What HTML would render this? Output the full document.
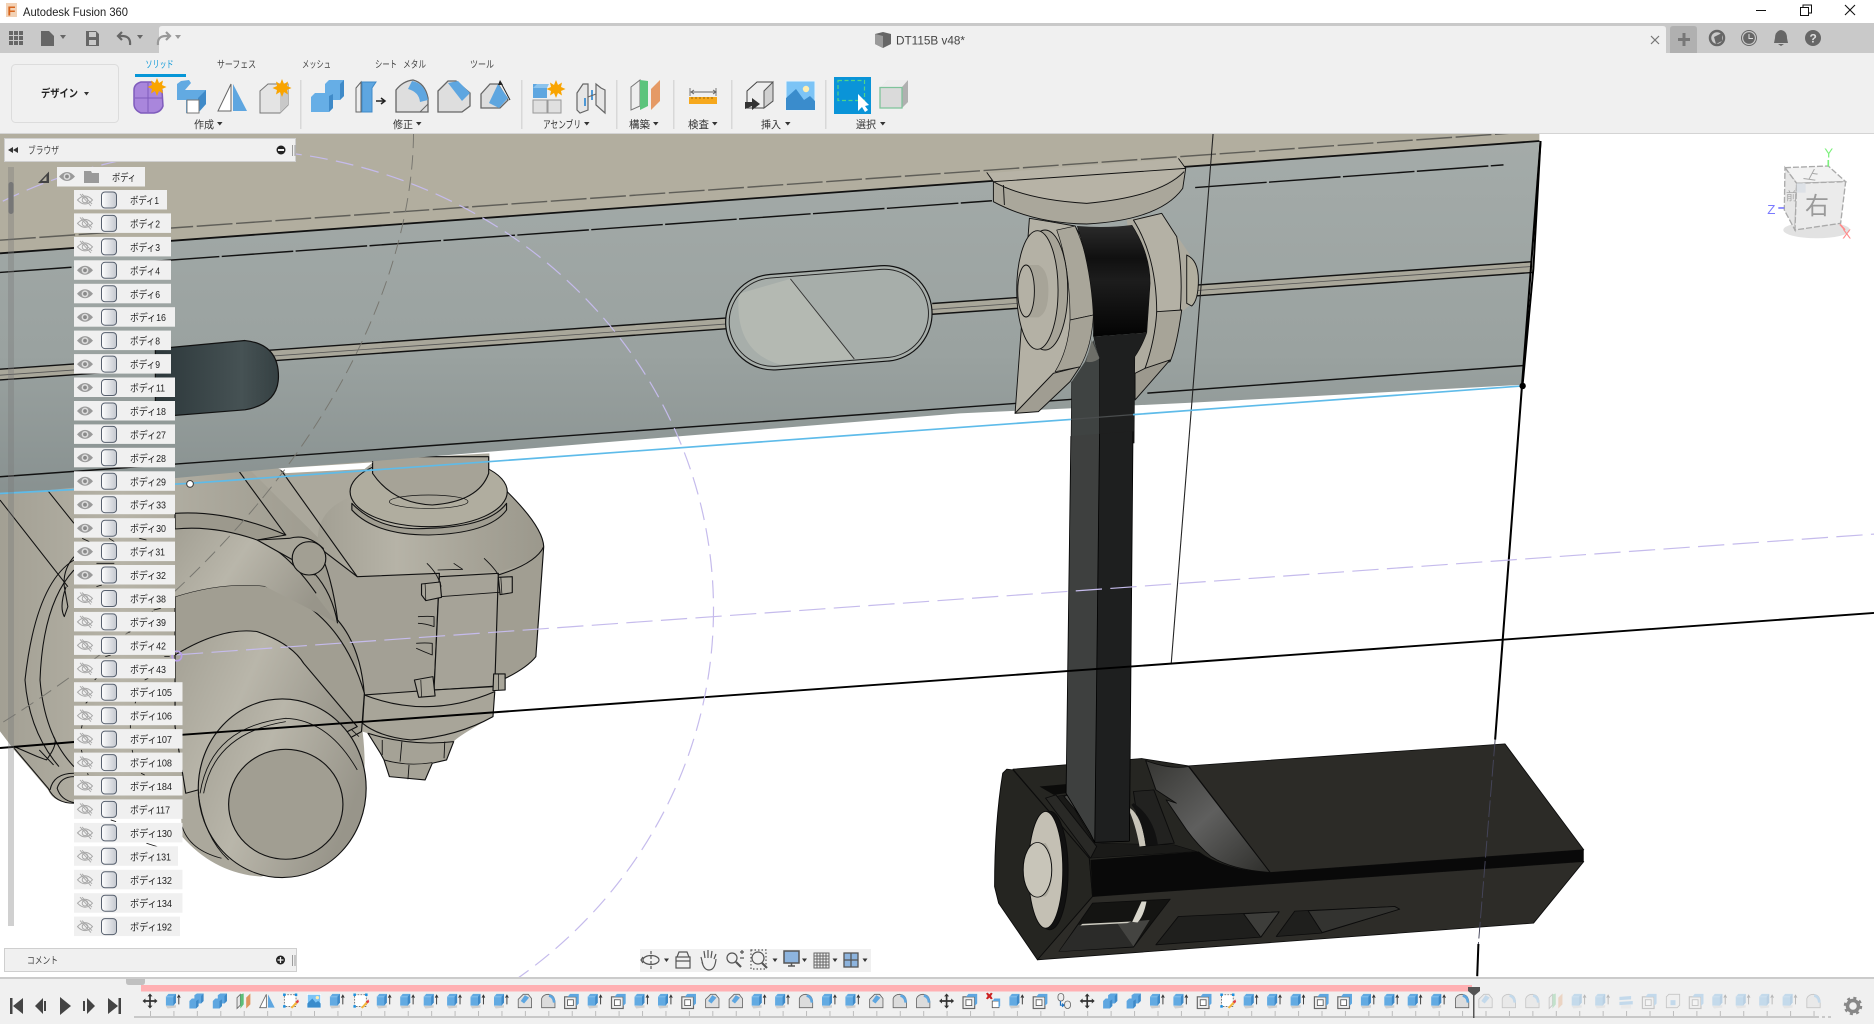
<!DOCTYPE html>
<html lang="ja"><head><meta charset="utf-8"><title>Autodesk Fusion 360</title>
<style>
html,body{margin:0;padding:0;width:1874px;height:1024px;overflow:hidden;background:#fff}
svg{position:absolute;left:0;top:0;display:block}
text{font-family:"Liberation Sans","Noto Sans CJK JP",sans-serif;fill:#333}
.r rect{fill:#f0f0f0}
.r text{font-size:10.5px;fill:#222}
.tab{font-size:10px;fill:#444}
.lbl{font-size:10.5px;fill:#333}
</style></head><body>
<svg width="1874" height="1024" viewBox="0 0 1568 857" preserveAspectRatio="none">
<defs>
<linearGradient id="gb" x1="0" y1="0" x2="0" y2="1"><stop offset="0" stop-color="#a4aba9"/><stop offset=".6" stop-color="#9aa2a0"/><stop offset="1" stop-color="#889190"/></linearGradient>
<linearGradient id="tn" x1="0" y1="0" x2="1" y2="0"><stop offset="0" stop-color="#a29f93"/><stop offset=".35" stop-color="#b6b3a7"/><stop offset=".7" stop-color="#a6a397"/><stop offset="1" stop-color="#9b988c"/></linearGradient>
<linearGradient id="tb" x1="0" y1="0" x2="1" y2=".4"><stop offset="0" stop-color="#a3a094"/><stop offset=".45" stop-color="#b9b6aa"/><stop offset="1" stop-color="#98958a"/></linearGradient>
<linearGradient id="fl" x1="0" y1="0" x2="1" y2="1"><stop offset="0" stop-color="#363633"/><stop offset=".5" stop-color="#5f5f5e"/><stop offset="1" stop-color="#2e2e2b"/></linearGradient>
<linearGradient id="hl" x1="0" y1="0" x2="1" y2="0"><stop offset="0" stop-color="#2c373a"/><stop offset=".7" stop-color="#465254"/><stop offset="1" stop-color="#354042"/></linearGradient>
<linearGradient id="bk" x1="0" y1="0" x2="0" y2="1"><stop offset="0" stop-color="#2b2b2b"/><stop offset=".3" stop-color="#101010"/><stop offset=".5" stop-color="#1d1d1d"/><stop offset="1" stop-color="#030303"/></linearGradient>
</defs>
<rect width="1568" height="857" fill="#fff"/>

<!-- lower machinery -->
<g transform="matrix(.2989 0 0 .2789 0 385)" stroke="#111" stroke-width="3.2" stroke-linejoin="round">
<path fill="#aba89c" stroke="none" d="M-10,60 L1370,-20 L1370,40 L1415,90 Q1520,200 1522,260 L1500,590 Q1470,630 1385,670 L1380,770 Q1280,830 1270,845 L1250,900 L1210,910 L1190,960 L1090,950 L1075,900 L1030,820 L1015,815 Q1030,950 1005,1040 Q950,1200 730,1250 Q600,1240 510,1130 L505,1030 L210,1030 Q150,1030 135,990 L40,870 L-10,800 Z"/>
<path fill="url(#tn)" stroke="none" d="M-10,90 L700,30 L1000,350 L1000,700 L500,1030 L210,1030 Q150,1030 135,990 L40,870 L-10,800 Z"/>
<path fill="url(#tn)" d="M985,110 Q880,150 890,260 L1000,350 L1395,335 Q1500,310 1522,260 Q1520,200 1415,90 Z" stroke="none"/>
<path fill="#a19e92" stroke="none" d="M1395,340 Q1500,310 1522,260 L1500,590 Q1470,630 1385,670Z"/>
<path fill="none" d="M1415,90 Q1520,200 1522,260 Q1500,310 1395,345 M1522,260 L1500,590 Q1470,630 1385,670"/>
<path fill="#a3a095" d="M890,260 L1000,350 L1230,340 L1215,690 L1020,705 Q1010,560 945,480 Q930,350 890,260Z"/>
<ellipse cx="1200" cy="95" rx="220" ry="105" fill="#b0ad9f"/>
<path fill="#a09d91" d="M985,130 Q1060,215 1200,205 Q1370,200 1418,130 L1418,150 Q1370,220 1200,225 Q1050,225 985,150Z"/>
<path fill="#a6a397" d="M1043,-10 L1043,40 Q1100,130 1210,135 Q1340,125 1368,40 L1368,-10Z"/>
<ellipse cx="1200" cy="125" rx="110" ry="20" fill="none" stroke-width="2"/>
<path fill="#a8a599" d="M1020,705 Q1200,780 1385,695 L1380,770 Q1280,830 1150,840 Q1060,830 1015,790Z"/>
<path fill="#a5a296" d="M1030,820 Q1150,860 1270,845 L1250,900 L1210,910 L1190,960 L1090,950 L1075,900 L1065,880Z"/>
<path fill="none" stroke-width="2.5" d="M1070,840 L1070,885 M1125,845 L1120,905 M1245,845 L1243,895 M1075,900 Q1140,920 1210,908 M1145,915 L1142,958"/>
<path fill="#a6a398" d="M1230,350 L1395,340 L1385,680 L1215,690Z"/>
<path fill="none" stroke-width="2.5" d="M1195,310 Q1225,340 1235,380 M1270,310 L1295,328 L1225,330 M1355,295 Q1385,325 1395,345 M1232,410 L1420,395 M1215,690 L1390,678 M1170,470 Q1200,468 1215,470 L1215,500 Q1190,490 1170,490 M1165,550 Q1190,548 1210,550 L1210,585 Q1185,575 1165,565"/>
<path fill="#a9a69a" d="M1180,372 L1232,366 L1236,412 L1192,422 L1180,405Z"/>
<path fill="#a9a69a" d="M1395,352 L1434,350 L1434,398 L1400,404Z"/>
<path fill="#a9a69a" d="M1160,660 L1212,650 L1218,708 L1172,712Z"/>
<path fill="#a9a69a" d="M1382,642 L1414,642 L1414,690 L1380,692Z"/>
<path fill="none" stroke-width="2" d="M1190,372 L1192,420 M1402,352 L1405,402 M1178,660 L1180,710 M1395,642 L1396,690"/>
<path fill="#a19e92" d="M490,410 Q620,365 740,378 Q950,440 1020,700 L1012,815 L700,1000 L500,760 L490,590Z"/>
<path fill="url(#tb)" d="M490,585 Q620,500 720,515 Q815,550 850,610 L1000,800 L760,930 L520,1000 L490,800Z"/>
<path fill="url(#tb)" stroke="none" d="M490,210 Q640,190 760,240 Q800,280 880,400 L945,490 L740,378 Q620,365 490,410Z"/>
<path fill="#9c998d" d="M490,160 Q640,150 800,225 L720,240 Q600,195 490,207Z"/>
<path fill="none" d="M670,35 L800,225 M780,20 L1000,350 M720,240 Q800,270 885,400 M880,340 Q930,400 945,490"/>
<path fill="#a8a599" d="M720,240 L810,235 Q860,220 905,265 L880,345 L820,300Z"/>
<ellipse cx="865" cy="295" rx="47" ry="50" fill="#a29f93"/>
<ellipse cx="790" cy="985" rx="235" ry="268" fill="url(#tb)"/>
<path fill="none" stroke-width="2.5" d="M560,1000 Q590,800 800,775 Q920,780 1000,930 M570,1000 Q600,820 800,785 M1005,830 L985,810"/>
<path fill="none" stroke-width="2.5" d="M555,1000 Q570,1130 640,1200 M510,1100 Q530,1170 620,1195"/>
<ellipse cx="800" cy="1033" rx="160" ry="165" fill="#a19e92"/>
<g fill="none" stroke-width="3">
<path d="M207,300 Q100,370 70,660 Q80,800 150,900 L165,920"/>
<path d="M207,330 Q120,430 112,660 Q125,830 207,920"/>
<path d="M207,290 Q175,330 180,380 L190,440 L180,470 Q165,440 185,380 M125,80 L207,190 M0,120 L190,380"/>
<path d="M40,860 L105,890 L130,900 Q165,850 150,830 M110,870 L150,915"/>
<path d="M40,865 L135,985 Q155,1030 207,1030 M207,940 Q150,940 140,990 M207,950 Q170,950 160,985 Q170,1020 207,1028"/>
</g>
<g fill="none" stroke-width="2.5"><path d="M230,235 L250,245 M305,235 L320,245 M390,235 L410,240 M270,310 L320,310 M270,380 L285,375 M430,450 L450,445 M355,520 L365,515 M295,590 L310,585 M460,590 L475,590 M265,660 L270,655 M405,660 L415,655 M240,730 L245,725 M378,730 L380,725 M230,795 L228,805 M365,795 L365,805 M228,870 L230,880 M370,870 L372,880 M245,940 L247,945 M395,940 L405,945 M310,1080 L325,1085 M410,1150 L440,1160"/></g>
</g>

<!-- beam -->
<path fill="url(#gb)" d="M0,212 L1288,118 L1274,322 L998,337 L803,346 L312,386 L233,392 L0,414Z"/>
<path fill="#fff" d="M233,392 L312,387 L305,392.5 L239,396Z"/>
<path fill="#b2ae9f" d="M0,112 L1288,112 L1288,118 L0,212Z"/>
<path fill="#a9a79a" d="M0,309 L1282,219 L1283,228 L0,318Z"/>
<g fill="none" stroke="#111" stroke-width="1.2">
<path d="M0,212 L1288,118" stroke-width="1.5"/>
<path d="M0,201 L1285,110" stroke="#5f5e58" stroke-dasharray="30 3"/>
<path d="M0,228 L830,168 M1000,157 L1258,138" stroke-dasharray="60 2"/>
<path d="M0,309 L610,266 M780,254 L1282,219 M0,318 L610,275 M780,263 L1283,228"/>
<path d="M0,314 L610,271 M780,259 L1282,223" stroke="#555" stroke-width=".7"/>
<path d="M0,399 L900,334 M960,329 L1274,306"/>
</g>
<g transform="rotate(-4.5 693 266)">
<rect x="607" y="226" width="173" height="80" rx="40" fill="#a7aeaa" stroke="#111" stroke-width="1"/>
<path fill="#b4b9b2" d="M620,240 L664,231 L712,302 L650,302 Q612,288 620,240Z"/>
<rect x="610" y="229" width="167" height="74" rx="37" fill="none" stroke="#222" stroke-width=".8"/>
<path d="M664,231 L712,302" stroke="#333" fill="none" stroke-width=".8"/>
</g>
<path fill="url(#hl)" stroke="#111" d="M130,292 L205,285 Q233,288 233,315 Q233,338 205,343 L130,349Z"/>

<!-- bracket -->
<g transform="matrix(.2789 0 0 .2789 803.3 117.2)" stroke="#111" stroke-width="2.8" stroke-linejoin="round">
<path fill="#aaa79b" d="M100,125 L100,185 Q220,250 380,252 Q600,240 668,145 L677,85Z"/>
<path fill="#b7b3a6" d="M100,125 Q200,180 380,190 Q600,170 677,85 L660,55 L80,100Z" stroke="none"/>
<path fill="none" d="M100,125 Q200,180 380,190 Q600,170 672,95 M130,135 L133,195 M80,97 L100,125 M655,55 L677,85 M100,125 L677,85"/>
<path fill="#b4b1a5" d="M208,235 L165,820 L280,700 L360,680 L400,520 L385,330 L345,258 L270,245Z"/>
<path fill="#a09d92" d="M165,820 L280,700 L360,680 L330,725 L235,815Z"/>
<path fill="#a9a69a" d="M290,270 L345,258 Q400,380 400,525 L330,540 Q330,380 290,270Z" stroke-width="2"/>
<path fill="#a5a296" d="M330,540 L400,525 Q395,620 360,680 L285,695 Q325,630 330,540Z" stroke-width="2"/>
<ellipse cx="255" cy="450" rx="68" ry="180" fill="#a7a498"/>
<ellipse cx="232" cy="450" rx="62" ry="178" fill="#b4b1a5"/>
<path d="M205,375 L235,375 Q265,390 265,450 Q265,520 235,532 L205,532Z" fill="#a7a498" stroke="none"/>
<ellipse cx="198" cy="453" rx="25" ry="78" fill="#b4b1a5"/>
<path fill="#aeab9f" stroke="none" d="M500,240 L605,220 L690,345 L690,495 L660,520 L630,665 L525,700 L520,400Z"/>
<path fill="#b4b1a5" d="M520,240 L605,220 L650,290 Q670,400 660,520 L590,520 Q590,350 520,240Z"/>
<path fill="#a7a498" d="M590,515 L665,510 Q650,620 630,665 L555,685 Q585,600 590,515Z"/>
<path fill="#9c998e" d="M555,685 L630,660 L525,780 L525,700Z"/>
<path fill="#b2af9f" d="M680,345 Q715,360 715,420 Q715,480 695,498 L680,490Z"/>
<path fill="url(#bk)" stroke="none" d="M352,258 Q440,265 515,255 Q570,340 570,430 L560,578 L400,590 Q405,430 352,258Z"/>
<path fill="#1e1f1f" stroke="none" d="M400,590 L560,578 Q545,620 524,650 L522,910 L418,910 L418,655 Q405,620 400,590Z"/>
<path fill="#3f4342" stroke="none" d="M400,600 L418,655 L418,910 L333,910 L335,725 L375,665Z"/>
<path fill="#6d6e68" stroke="none" d="M395,600 L418,655 Q400,670 378,665Z"/>
<path fill="none" d="M352,258 Q405,430 400,590 M515,255 Q570,340 570,430 L560,578 Q545,620 524,650 L522,910 M418,655 L418,910 M335,725 L333,910" stroke-width="2"/>
</g>

<!-- foot -->
<g transform="matrix(.3416 0 0 .2789 811.7 619.2)" stroke="#0c0c0c" stroke-width="2.4" stroke-linejoin="round">
<path fill="#252521" d="M90,88 L105,90 L292,355 L300,470 L165,660 L70,490 L60,440 Q60,250 80,100Z"/>
<path fill="#2d2c28" d="M300,470 L1503,365 L1380,550 L165,660Z"/>
<path fill="#262622" d="M105,88 L420,56 L535,78 L735,398 L300,470 L292,355Z"/>
<path fill="#0b0b0a" d="M170,140 L235,133 L235,160 L205,165Z" stroke="none"/>
<path fill="#2c2b27" d="M535,78 L1310,12 L1503,330 L735,398Z"/>
<path fill="url(#fl)" d="M430,62 Q490,90 535,80 L735,398 Q640,390 590,350 Q560,320 530,270 L480,180 L505,190 L455,150Z"/>
<path fill="#090909" stroke="none" d="M295,360 L560,335 Q620,390 735,398 L1503,330 L1503,365 L300,470Z"/>
<path fill="#1a1a18" d="M185,175 L235,165 L305,310 L500,315 L555,335 L295,355Z" stroke-width="1.5"/>
<path fill="#222220" d="M400,155 L450,150 L500,310 L420,320Z"/>
<path fill="#c9c5b9" stroke="none" d="M385,200 Q420,220 430,318 L415,320 Q405,250 385,200Z"/>
<path fill="#111" stroke="none" d="M400,190 Q450,230 460,315 L430,318 Q420,230 395,195Z"/>
<path fill="#292926" d="M185,175 L210,165 L310,320 L295,355Z"/>
<path fill="#4a4b48" d="M230,170 Q260,150 290,190 L300,230 L295,265Z"/>
<ellipse cx="195" cy="392" rx="45" ry="178" fill="#111"/>
<ellipse cx="185" cy="390" rx="42" ry="175" fill="#c4c0b4"/>
<path fill="#aba89c" stroke="none" d="M150,312 L185,310 Q202,340 200,390 Q200,450 185,470 L150,470Z"/>
<ellipse cx="165" cy="390" rx="35" ry="82" fill="#c8c5b9"/>
<path fill="#141412" d="M300,490 L490,478 L400,622 L218,635Z"/>
<path fill="#2b2b29" stroke="none" d="M265,555 L360,550 L400,620 L218,635Z"/>
<path fill="#444441" stroke="none" d="M360,550 L440,540 L400,620Z"/>
<path fill="#cfcdc2" stroke="none" d="M275,552 L395,545 L385,550 L270,557Z"/>
<path fill="#d8d6cc" stroke="none" d="M420,485 L432,485 Q425,530 410,548 L397,546Z"/>
<path fill="#1f1f1d" d="M510,530 L757,516 L712,592 L455,615Z"/>
<path fill="#3d3d3a" d="M670,522 L757,516 L712,592Z"/>
<path fill="#1f1f1d" d="M795,514 L1040,500 L1052,508 L860,580 L750,590Z"/>
<path fill="#333330" d="M828,513 L1040,500 L1052,508 L862,578Z"/>
</g>

<!-- arm, over the foot -->
<path fill="#3e403f" d="M896,365 L920,363 L916,705 L912,697 L892,664Z"/>
<path fill="#1e1f1f" d="M920,363 L948,361 L945,704 L916,706Z"/>
<path d="M896,365 L892,664 L912,697 L916,705 M920,363 L916,705 M948,361 L945,704 M916,705 L945,704" stroke="#000" stroke-width=".7" fill="none"/>

<!-- construction lines -->
<g fill="none">
<path d="M1015,112 L980,555" stroke="#222" stroke-width=".9"/>
<path d="M1289,118 L1251,619 M1237,790 L1236,817" stroke="#000" stroke-width="1.7"/>
<path d="M1251,619 L1237,790" stroke="#45455a" stroke-width=".8" stroke-dasharray="14 3"/>
<path d="M0,626 L62,621 M152,615 L1568,513" stroke="#000" stroke-width="1.6"/>
<path d="M148,548 L1568,447" stroke="#c5bbec" stroke-width="1" stroke-dasharray="22 7"/>
<ellipse cx="190" cy="510" rx="407" ry="385" stroke="#c5bbec" stroke-width="1" stroke-dasharray="15 7"/>
<path d="M346,112 C345,250 250,450 0,606" stroke="#77766f" stroke-width=".8" stroke-dasharray="12 6"/>
<path d="M0,413 L159,404.5 L896,351 M948,347 L1274,323" stroke="#5ebbe9" stroke-width="1.4"/>
<path d="M896,351 L948,347" stroke="#4a4d4e" stroke-width="1"/>
<path d="M1289,118 L1283,225 L1274,322" stroke="#000" stroke-width="1.6"/>
</g>
<circle cx="1274" cy="323" r="2.7" fill="#000"/>
<circle cx="159" cy="405" r="2.8" fill="#fff" stroke="#333" stroke-width=".8"/>
<circle cx="148" cy="549" r="4" fill="none" stroke="#b79fe6" stroke-width="1.4"/>
</svg>

<svg width="1874" height="1024" viewBox="0 0 1874 1024">
<defs>
<linearGradient id="cy" x1="0" y1="0" x2="1" y2="0"><stop offset="0" stop-color="#fff"/><stop offset="1" stop-color="#c4c8cf"/></linearGradient>
<symbol id="c" width="18" height="18" viewBox="0 0 18 18"><rect x="1.5" y="1" width="15" height="16" rx="3.5" fill="url(#cy)" stroke="#57606e" stroke-width="1"/></symbol>
<symbol id="e" width="18" height="12" viewBox="0 0 18 12"><path d="M1,6 Q9,-3 17,6 Q9,15 1,6Z" fill="#9a9a9a"/><circle cx="9" cy="6" r="3.4" fill="#ddd"/><circle cx="9" cy="6" r="1.9" fill="#8a8a8a"/></symbol>
<symbol id="h" width="18" height="14" viewBox="0 0 18 14"><path d="M1.5,7 Q9,-1 16.5,7 Q9,15 1.5,7Z" fill="none" stroke="#a8a8a8" stroke-width="1"/><circle cx="9" cy="7" r="2.8" fill="none" stroke="#a8a8a8"/><path d="M4,1 L15,13 M6,1 L16,11" stroke="#a8a8a8" stroke-width=".9"/></symbol>
<symbol id="E" width="20" height="20" viewBox="-2 -2 24 24"><path d="M1,16 L13,15 L13,18 L3,19Z" fill="#cfcfcf"/><path d="M1,5 L4,1.5 L13,1.5 L13,12 L10,15.5 L1,15.5Z" fill="#62aae2"/><path d="M10,15.5 L10,5 L13,1.5 L13,12Z" fill="#3f8ac8"/><path d="M1,5 L10,5" stroke="#8cc4ee"/><path d="M16.5,14 L16.5,4 M14.8,6 L16.5,3 L18.2,6" stroke="#333" fill="none" stroke-width="1.1"/></symbol>
<symbol id="O" width="20" height="20" viewBox="-2 -2 24 24"><path d="M1,10 L4,7 L7,7 L7,3 L10,1 L18,1 L18,10 L15,13 L12,13 L12,16 L9,19 L1,19Z" fill="#5ea6e0"/><path d="M15,13 L15,4 L18,1 L18,10Z M9,19 L9,10 L12,8 L12,16Z" fill="#3f8ac8"/></symbol>
<symbol id="C" width="20" height="20" viewBox="-2 -2 24 24"><path d="M2,8 L8,2 L14,2 L18,7 L18,18 L2,18Z" fill="#e0e0e0" stroke="#666"/><path d="M5,10 L10,3 L15,6 L9,13Z" fill="#5ea6e0"/></symbol>
<symbol id="F" width="20" height="20" viewBox="-2 -2 24 24"><path d="M2,7 Q4,2 10,2 Q18,3 18,12 L18,18 L2,18Z" fill="#dcdcdc" stroke="#666"/><path d="M11,2 Q18,3 18.5,12 L15.5,12 Q15,6 10.5,5Z" fill="#5ea6e0"/></symbol>
<symbol id="H" width="20" height="20" viewBox="-2 -2 24 24"><rect x="1.5" y="5" width="14" height="14" fill="#eee" stroke="#666" stroke-width="1.4"/><rect x="5" y="8.5" width="7" height="7" fill="#fff" stroke="#555"/><path d="M5,5 L8,1.5 L18.5,1.5 L18.5,13 L15.5,16 L15.5,5" fill="#5ea6e0"/></symbol>
<symbol id="M" width="20" height="20" viewBox="-2 -2 24 24"><path d="M10,1 L13,4.5 L11,4.5 L11,9 L15.5,9 L15.5,7 L19,10 L15.5,13 L15.5,11 L11,11 L11,15.5 L13,15.5 L10,19 L7,15.5 L9,15.5 L9,11 L4.5,11 L4.5,13 L1,10 L4.5,7 L4.5,9 L9,9 L9,4.5 L7,4.5Z" fill="#333"/></symbol>
<symbol id="P" width="20" height="20" viewBox="-2 -2 24 24"><path d="M2,6 L6,2 L6,15 L2,19Z" fill="#e8e8e8" stroke="#666"/><path d="M6,2 L10,1 L10,14 L6,19Z" fill="#5cbf78"/><path d="M13,6 L18,1 L18,14 L13,19Z" fill="#e0955e"/></symbol>
<symbol id="R" width="20" height="20" viewBox="-2 -2 24 24"><path d="M9,2 L9,18 L1,18Z" fill="#fff" stroke="#666"/><path d="M11,2 L19,18 L11,18Z" fill="#5ea6e0"/></symbol>
<symbol id="S" width="20" height="20" viewBox="-2 -2 24 24"><rect x="2.5" y="2.5" width="14" height="14" fill="#fff" stroke="#666" stroke-dasharray="2 1.5"/><rect x="1" y="1" width="3" height="3" fill="#1a8fe0"/><rect x="15" y="1" width="3" height="3" fill="#1a8fe0"/><rect x="1" y="15" width="3" height="3" fill="#1a8fe0"/><path d="M10,18 L17,10 L19,12 L12,19Z" fill="#f6b73c"/><path d="M16,11 L19,8 L20,11 L18,13Z" fill="#e0404a"/></symbol>
<symbol id="I" width="20" height="20" viewBox="-2 -2 24 24"><rect x="2" y="2" width="16" height="16" fill="#7cc4f6" stroke="#fff"/><circle cx="14" cy="6" r="2" fill="#ffeeb0"/><path d="M2,18 L2,13 L8,7 L12,12 L15,10 L18,13 L18,18Z" fill="#3a8ccc"/></symbol>
<symbol id="X" width="20" height="20" viewBox="-2 -2 24 24"><path d="M1,1 L3,0 L5,2 L7,0 L9,1 L7,4 L9,7 L7,8 L5,6 L3,8 L1,7 L3,4Z" fill="#cc2222"/><rect x="8.5" y="10" width="8" height="8" fill="#fff" stroke="#555"/><path d="M9,10 L11,7 L18,7 L18,16 L16,18 L16,10Z" fill="#5ea6e0"/></symbol>
<symbol id="J" width="20" height="20" viewBox="-2 -2 24 24"><rect x="3" y="1" width="7" height="9" rx="3.5" fill="#eee" stroke="#666"/><rect x="11" y="10" width="7" height="9" rx="3.5" fill="#eee" stroke="#666"/><path d="M6,10 L6,15 L10,15 M8,13 L10,15 L8,17" stroke="#1a6fc0" fill="none" stroke-width="1.4"/></symbol>
<symbol id="B" width="20" height="20" viewBox="-2 -2 24 24"><path d="M2,5 L5,2 L18,2 L18,15 L15,18 L2,18Z" fill="#eee" stroke="#666"/><rect x="7" y="9" width="6" height="6" fill="#5ea6e0"/></symbol>
<symbol id="Y" width="20" height="20" viewBox="-2 -2 24 24"><path d="M2,5 L16,4 L16,8 L2,9Z M2,11 L18,10 L18,14 L2,15Z" fill="#5ea6e0"/><path d="M4,15 L16,15 L16,19 L4,19Z" fill="#ddd"/></symbol>
<pattern id="tk" width="23.43" height="6" patternUnits="userSpaceOnUse" x="150"><rect width="1" height="6" fill="#bcbcbc"/></pattern>
<polygon id="star" points="0,-9 2,-4 6,-6.5 5,-2 9.5,0 5,2 6,6.5 2,4 0,9 -2,4 -6,6.5 -5,2 -9.5,0 -5,-2 -6,-6.5 -2,-4" fill="#f9a400"/>
</defs>

<!-- title bar -->
<rect width="1874" height="23" fill="#fff"/>
<rect x="6" y="3" width="11" height="14" fill="#f2d2b6"/>
<text x="7.5" y="15.5" style="font-size:13px;font-weight:bold;fill:#d8651d">F</text>
<text x="23" y="16" style="font-size:12px;fill:#222" textLength="105" lengthAdjust="spacingAndGlyphs">Autodesk Fusion 360</text>
<path d="M1756,10.5 H1766" stroke="#111" stroke-width="1"/>
<path d="M1800.5,7.5 h8 v8 h-8Z M1803,7 V5 h8.5 v8 h-2.5" fill="none" stroke="#111"/>
<path d="M1845,5 L1855,15 M1855,5 L1845,15" stroke="#111" stroke-width="1.1"/>

<!-- tab strip -->
<rect y="23" width="1874" height="30" fill="#c9c9c9"/>
<path d="M159,53 V29 Q159,26 162,26 H1663 Q1666,26 1666,29 V53Z" fill="#f0f0f0"/>
<rect y="53" width="1874" height="80" fill="#f0f0f0"/>
<rect y="133" width="1874" height="1" fill="#d4d4d4"/>
<g fill="#666">
<rect x="9" y="31" width="4" height="4"/><rect x="14" y="31" width="4" height="4"/><rect x="19" y="31" width="4" height="4"/>
<rect x="9" y="36" width="4" height="4"/><rect x="14" y="36" width="4" height="4"/><rect x="19" y="36" width="4" height="4"/>
<rect x="9" y="41" width="4" height="4"/><rect x="14" y="41" width="4" height="4"/><rect x="19" y="41" width="4" height="4"/>
<path d="M41,31 H49 L54,36 V46 H41Z"/>
<path d="M60,35 h6 l-3,4Z"/>
<path d="M86,31 H96 L99,34 V46 H86Z M89,32 V37 H96 V32Z M89,40 V45 H96 V40Z" fill-rule="evenodd"/>
<path d="M137,35 h6 l-3,4Z"/>
</g>
<path d="M130,45 Q131,36 122,36 L118,36 M122,32 L118,36 L122,40" fill="none" stroke="#666" stroke-width="2.2"/>
<path d="M158,45 Q157,36 166,36 L170,36 M166,32 L170,36 L166,40" fill="none" stroke="#999" stroke-width="2.2"/>
<path d="M175,35 h6 l-3,4Z" fill="#999"/>
<path d="M875,34 L883,32 L891,34 L891,44 L883,48 L875,44Z" fill="#666"/><path d="M875,34 L883,36 L883,48 L875,44Z" fill="#9a9a9a"/>
<text x="896" y="44.5" style="font-size:12px;fill:#444" textLength="69" lengthAdjust="spacingAndGlyphs">DT115B v48*</text>
<path d="M1651,36 L1659,44 M1659,36 L1651,44" stroke="#777" stroke-width="1.2"/>
<path d="M1670,53 V29 Q1670,26 1673,26 H1694 Q1697,26 1697,29 V53Z" fill="#b0b0b0"/>
<path d="M1684,33 V46 M1678,39.5 H1690" stroke="#777" stroke-width="3"/>
<circle cx="1717" cy="38" r="7" fill="none" stroke="#666" stroke-width="2.5"/><path d="M1714,37 L1722,33 L1722,41 L1716,44Z" fill="#666"/>
<circle cx="1749" cy="38" r="7.5" fill="none" stroke="#666"/><circle cx="1749" cy="38" r="5.8" fill="#666"/><path d="M1749,34 V38.5 H1753" stroke="#ddd" fill="none"/>
<path d="M1781,30 Q1787,31 1787,38 L1788,43 H1774 L1775,38 Q1775,31 1781,30Z M1778,44 H1784 L1781,46Z" fill="#666"/>
<circle cx="1813" cy="38" r="8" fill="#666"/><text x="1809.5" y="42.5" style="font-size:12px;font-weight:bold;fill:#ddd">?</text>

<!-- design button -->
<rect x="11.5" y="64.5" width="107" height="58" rx="4" fill="#f0f0f0" stroke="#dcdcdc"/>
<text x="41" y="97" style="font-size:11px;font-weight:bold;fill:#222" textLength="37" lengthAdjust="spacingAndGlyphs">デザイン</text>
<path d="M84,92 h5 l-2.5,3.5Z" fill="#333"/>
<!-- tabs -->
<text x="145.5" y="68" class="tab" style="fill:#0696d7" textLength="28" lengthAdjust="spacingAndGlyphs">ソリッド</text>
<rect x="135" y="74" width="51" height="3" fill="#0696d7"/>
<text x="217" y="68" class="tab" textLength="39" lengthAdjust="spacingAndGlyphs">サーフェス</text>
<text x="302" y="68" class="tab" textLength="29" lengthAdjust="spacingAndGlyphs">メッシュ</text>
<text x="375" y="68" class="tab" textLength="22" lengthAdjust="spacingAndGlyphs">シート</text>
<text x="403" y="68" class="tab" textLength="23" lengthAdjust="spacingAndGlyphs">メタル</text>
<text x="470" y="68" class="tab" textLength="24" lengthAdjust="spacingAndGlyphs">ツール</text>
<g fill="#d8d8d8"><rect x="300" y="80" width="1.5" height="49"/><rect x="521" y="80" width="1.5" height="49"/><rect x="616" y="80" width="1.5" height="49"/><rect x="673" y="80" width="1.5" height="49"/><rect x="731" y="80" width="1.5" height="49"/><rect x="825" y="80" width="1.5" height="49"/></g>
<g>
<text x="194" y="128" class="lbl" textLength="20" lengthAdjust="spacingAndGlyphs">作成</text><path d="M217,122 h5.5 l-2.7,3.5Z" fill="#333"/>
<text x="393" y="128" class="lbl" textLength="20" lengthAdjust="spacingAndGlyphs">修正</text><path d="M416,122 h5.5 l-2.7,3.5Z" fill="#333"/>
<text x="543" y="128" class="lbl" textLength="38" lengthAdjust="spacingAndGlyphs">アセンブリ</text><path d="M584,122 h5.5 l-2.7,3.5Z" fill="#333"/>
<text x="629" y="128" class="lbl" textLength="21" lengthAdjust="spacingAndGlyphs">構築</text><path d="M653,122 h5.5 l-2.7,3.5Z" fill="#333"/>
<text x="688" y="128" class="lbl" textLength="21" lengthAdjust="spacingAndGlyphs">検査</text><path d="M712,122 h5.5 l-2.7,3.5Z" fill="#333"/>
<text x="761" y="128" class="lbl" textLength="20" lengthAdjust="spacingAndGlyphs">挿入</text><path d="M785,122 h5.5 l-2.7,3.5Z" fill="#333"/>
<text x="856" y="128" class="lbl" textLength="20" lengthAdjust="spacingAndGlyphs">選択</text><path d="M880,122 h5.5 l-2.7,3.5Z" fill="#333"/>
</g>
<!-- solid create -->
<path d="M134,90 Q134,84 141,82 L152,82 L162,90 L163,106 Q161,112 154,113 L141,113 Q134,110 134,104Z" fill="#a986dc" stroke="#7f5cbc" stroke-width="1.5"/>
<path d="M135,98 H162 M148,83 V112" stroke="#7f5cbc"/>
<use href="#star" x="157" y="87"/>
<!-- form -->
<path d="M177,92 L177,84 L181,81 L189,80 L191,83 L185,90 L206,90 L206,104 L198,113 L186,113 L186,100 L177,100Z" fill="#62aae2"/>
<path d="M198,113 L198,98 L206,90 L206,104Z" fill="#3f8ac8"/>
<rect x="187" y="100" width="12" height="13" fill="#fff" stroke="#777"/>
<!-- mirror -->
<path d="M231,84 L231,111 L218,111Z" fill="#fff" stroke="#666"/>
<path d="M233,84 L247,111 L233,111Z" fill="#5ea6e0"/>
<!-- box -->
<path d="M260,91 L268,84 L288,84 L288,105 L280,113 L260,113Z" fill="#e4e4e4" stroke="#777"/>
<path d="M280,113 L280,92 L288,84 L288,105Z" fill="#c8c8c8"/>
<use href="#star" x="282" y="88"/>
<!-- press pull -->
<path d="M311,97 L315,93 L325,93 L325,84 L329,80 L344,80 L344,96 L340,100 L333,100 L333,108 L329,112 L311,112Z" fill="#66aee6"/>
<path d="M340,100 L340,84 L344,80 L344,96Z M329,112 L329,96 L333,94 L333,108Z" fill="#3f8ac8"/>
<!-- split -->
<path d="M356,88 L361,82 L361,112 L356,112Z" fill="#eee" stroke="#666"/>
<path d="M362,82 H376 L372,88 L372,112 H362Z" fill="#5ea6e0" stroke="#3f8ac8"/>
<path d="M376,101 H384 M381,98 L385,101 L381,104" stroke="#222" stroke-width="1.5" fill="none"/>
<!-- fillet -->
<path d="M396,90 Q403,81 413,80 Q425,83 428,98 L428,112 L396,112Z" fill="#dedede" stroke="#666" stroke-width="1.3"/>
<path d="M412,81 Q425,83 428,100 L420,102 Q419,92 408,89Z" fill="#5ea6e0"/>
<path d="M420,112 L428,104" stroke="#666"/>
<!-- chamfer -->
<path d="M438,91 L448,81 L456,81 L470,93 L470,106 L462,112 L438,112Z" fill="#dedede" stroke="#666" stroke-width="1.3"/>
<path d="M448,83 L458,81 L470,93 L462,101Z" fill="#5ea6e0"/>
<!-- draft -->
<path d="M481,94 L490,84 L498,84 L508,100 L500,108 L481,108Z" fill="#dedede" stroke="#666" stroke-width="1.3"/>
<path d="M489,103 L498,84 L508,98 L499,108Z" fill="#5ea6e0"/>
<path d="M501,83 L510,100" stroke="#222"/>
<path d="M500,80 L503,85 L498,85Z" fill="#222"/>
<!-- assembly new -->
<rect x="533" y="84" width="14" height="14" fill="#5ea6e0"/><path d="M533,88 L537,84 H549 L547,88Z" fill="#8cc4ee"/>
<path d="M533,100 H547 V113 H533Z M548,100 H561 V113 H548Z" fill="#e0e0e0" stroke="#999"/>
<use href="#star" x="556" y="89"/>
<!-- joint -->
<path d="M577,93 L583,84 L588,84 L588,110 L580,113 L577,110Z M596,84 L601,88 L605,90 L605,113 L596,105Z" fill="#e6e6e6" stroke="#666" stroke-width="1.2"/>
<path d="M592,90 V100 M585,98 V106" stroke="#1a7fd0" stroke-width="1.5"/>
<path d="M588,97 L596,94" stroke="#666"/>
<!-- plane -->
<path d="M631,87 L640,80 L640,106 L631,110Z" fill="#eee" stroke="#777"/>
<path d="M640,80 L648,81 L648,106 L640,110Z" fill="#5cc47c"/>
<path d="M651,89 L660,80 L660,101 L651,110Z" fill="#e59a66"/>
<!-- measure -->
<path d="M690,88 V96 M716,88 V96" stroke="#777"/>
<path d="M691,92 H716 M694,90 L691,92 L694,94 M713,90 L716,92 L713,94" stroke="#666" fill="none"/>
<rect x="689" y="97" width="28" height="7" fill="#f6a81c"/>
<path d="M692,97 v2 M696,97 v2 M700,97 v2 M704,97 v2 M708,97 v2 M712,97 v2" stroke="#8a5a00" stroke-width=".8"/>
<!-- insert -->
<path d="M747,91 L757,82 L773,82 L773,101 L764,108 L747,108Z" fill="#eee" stroke="#444"/>
<path d="M764,108 L764,91 L773,82 L773,101Z" fill="#d0d0d0" stroke="#555"/>
<path d="M745,102 L752,102 L752,98 L760,104 L752,110 L752,106 L745,109Z" fill="#333"/>
<!-- image -->
<rect x="786" y="81" width="29" height="29" fill="#7cc4f6" stroke="#e8f4fc"/>
<circle cx="806" cy="89" r="3.2" fill="#ffeeb0"/>
<path d="M786,110 L786,98 L796,89 L804,100 L810,96 L815,101 L815,110Z" fill="#3a8ccc"/>
<!-- select -->
<rect x="834" y="77" width="37" height="37" fill="#0a94d8"/>
<rect x="838" y="80.5" width="26.5" height="20" fill="none" stroke="#4fd48a" stroke-width="1.2" stroke-dasharray="4 2.5"/>
<path d="M858,94 L858,111 L862,107 L865,112 L868,110 L865,106 L869,105Z" fill="#fff"/>
<!-- cube -->
<path d="M880,88 L888,80 L908,80 L908,102 L902,108 L880,108Z" fill="#dadada"/>
<path d="M902,108 L902,86 L908,80 L908,102Z" fill="#b0b0b0"/><path d="M880,88 L888,80 L908,80 L902,87Z" fill="#ececec"/>
<path d="M880,87.5 H902 V108 H880Z" fill="none" stroke="#7ec39a" stroke-width="1.3"/>

<!-- viewcube -->
<g transform="translate(1500 0) scale(.3333)">
<ellipse cx="950" cy="690" rx="100" ry="25" fill="#d6d6d6" opacity=".7"/>
<path d="M855,503 L985,498 L1037,545 L890,550Z" fill="#f2f2f2" stroke="#aaa" stroke-width="4" stroke-dasharray="18 6"/>
<path d="M855,503 L890,550 L885,690 L853,630Z" fill="#e6e6e6" stroke="#aaa" stroke-width="4" stroke-dasharray="18 6"/>
<path d="M890,550 L1037,545 L1022,670 L885,690Z" fill="#ebebeb" stroke="#aaa" stroke-width="4" stroke-dasharray="18 6"/>
<rect x="890" y="550" width="27" height="28" fill="#dde1e6"/>
<text x="915" y="642" style="font-size:72px;fill:#9a9a9a">右</text>
<g transform="translate(935 525) rotate(8) skewX(-20)"><text x="-20" y="14" style="font-size:40px;fill:#a8a8a8">上</text></g>
<text x="858" y="600" style="font-size:34px;fill:#a8a8a8">前</text>
<path d="M985,480 V500" stroke="#7cf07c" stroke-width="5"/>
<text x="973" y="472" style="font-size:40px;fill:#7cf07c">Y</text>
<path d="M835,624 H853" stroke="#7a7aff" stroke-width="5"/>
<text x="802" y="642" style="font-size:40px;fill:#7a7aff">Z</text>
<path d="M1020,673 L1035,690" stroke="#ff8a8a" stroke-width="5"/>
<text x="1027" y="716" style="font-size:40px;fill:#ff8a8a">X</text>
</g>

<!-- browser panel -->
<rect x="4.5" y="138.5" width="291" height="23" fill="#f0f0f0" stroke="#cfcfcf"/>
<path d="M13,150 L18,147 V153Z M8,150 L13,147 V153Z" fill="#333"/>
<text x="28" y="154" style="font-size:10px;fill:#444" textLength="31" lengthAdjust="spacingAndGlyphs">ブラウザ</text>
<circle cx="281" cy="150" r="4.5" fill="#222"/><rect x="278" y="149" width="6" height="2" fill="#f0f0f0"/>
<path d="M292.5,145 V156 M295,145 V156" stroke="#888" stroke-width=".8"/>
<rect x="8" y="167" width="6" height="759" fill="#777" opacity=".35"/>
<rect x="8.5" y="182" width="5" height="32" rx="2.5" fill="#777"/>
<path d="M49,171.5 V183 H38Z M46.5,176 V181 H42Z" fill="#444" fill-rule="evenodd"/>
<rect x="57" y="167" width="88" height="19.5" fill="#f0f0f0"/>
<use href="#e" x="58" y="170.5"/>
<path d="M84,171 H91 L92,173 H99 V183 H84Z" fill="#9a9a9a"/>
<text x="112" y="181" style="font-size:10.5px;fill:#222" textLength="24" lengthAdjust="spacingAndGlyphs">ボディ</text>

<g class="r" transform="translate(0,190)"><rect x="74" width="93" height="19.5"/><use href="#h" x="76" y="3"/><use href="#c" x="100" y="1"/><text x="130" y="14" textLength="29" lengthAdjust="spacingAndGlyphs">ボディ1</text></g>
<g class="r" transform="translate(0,213.4)"><rect x="74" width="97" height="19.5"/><use href="#h" x="76" y="3"/><use href="#c" x="100" y="1"/><text x="130" y="14" textLength="30" lengthAdjust="spacingAndGlyphs">ボディ2</text></g>
<g class="r" transform="translate(0,236.9)"><rect x="74" width="97" height="19.5"/><use href="#h" x="76" y="3"/><use href="#c" x="100" y="1"/><text x="130" y="14" textLength="30" lengthAdjust="spacingAndGlyphs">ボディ3</text></g>
<g class="r" transform="translate(0,260.3)"><rect x="74" width="97" height="19.5"/><use href="#e" x="76" y="4"/><use href="#c" x="100" y="1"/><text x="130" y="14" textLength="30" lengthAdjust="spacingAndGlyphs">ボディ4</text></g>
<g class="r" transform="translate(0,283.8)"><rect x="74" width="97" height="19.5"/><use href="#e" x="76" y="4"/><use href="#c" x="100" y="1"/><text x="130" y="14" textLength="30" lengthAdjust="spacingAndGlyphs">ボディ6</text></g>
<g class="r" transform="translate(0,307.2)"><rect x="74" width="101" height="19.5"/><use href="#e" x="76" y="4"/><use href="#c" x="100" y="1"/><text x="130" y="14" textLength="36" lengthAdjust="spacingAndGlyphs">ボディ16</text></g>
<g class="r" transform="translate(0,330.6)"><rect x="74" width="97" height="19.5"/><use href="#e" x="76" y="4"/><use href="#c" x="100" y="1"/><text x="130" y="14" textLength="30" lengthAdjust="spacingAndGlyphs">ボディ8</text></g>
<g class="r" transform="translate(0,354.1)"><rect x="74" width="97" height="19.5"/><use href="#e" x="76" y="4"/><use href="#c" x="100" y="1"/><text x="130" y="14" textLength="30" lengthAdjust="spacingAndGlyphs">ボディ9</text></g>
<g class="r" transform="translate(0,377.5)"><rect x="74" width="101" height="19.5"/><use href="#e" x="76" y="4"/><use href="#c" x="100" y="1"/><text x="130" y="14" textLength="35" lengthAdjust="spacingAndGlyphs">ボディ11</text></g>
<g class="r" transform="translate(0,401)"><rect x="74" width="101" height="19.5"/><use href="#e" x="76" y="4"/><use href="#c" x="100" y="1"/><text x="130" y="14" textLength="36" lengthAdjust="spacingAndGlyphs">ボディ18</text></g>
<g class="r" transform="translate(0,424.4)"><rect x="74" width="101" height="19.5"/><use href="#e" x="76" y="4"/><use href="#c" x="100" y="1"/><text x="130" y="14" textLength="36" lengthAdjust="spacingAndGlyphs">ボディ27</text></g>
<g class="r" transform="translate(0,447.8)"><rect x="74" width="101" height="19.5"/><use href="#e" x="76" y="4"/><use href="#c" x="100" y="1"/><text x="130" y="14" textLength="36" lengthAdjust="spacingAndGlyphs">ボディ28</text></g>
<g class="r" transform="translate(0,471.3)"><rect x="74" width="101" height="19.5"/><use href="#e" x="76" y="4"/><use href="#c" x="100" y="1"/><text x="130" y="14" textLength="36" lengthAdjust="spacingAndGlyphs">ボディ29</text></g>
<g class="r" transform="translate(0,494.7)"><rect x="74" width="101" height="19.5"/><use href="#e" x="76" y="4"/><use href="#c" x="100" y="1"/><text x="130" y="14" textLength="36" lengthAdjust="spacingAndGlyphs">ボディ33</text></g>
<g class="r" transform="translate(0,518.2)"><rect x="74" width="101" height="19.5"/><use href="#e" x="76" y="4"/><use href="#c" x="100" y="1"/><text x="130" y="14" textLength="36" lengthAdjust="spacingAndGlyphs">ボディ30</text></g>
<g class="r" transform="translate(0,541.6)"><rect x="74" width="101" height="19.5"/><use href="#e" x="76" y="4"/><use href="#c" x="100" y="1"/><text x="130" y="14" textLength="35" lengthAdjust="spacingAndGlyphs">ボディ31</text></g>
<g class="r" transform="translate(0,565)"><rect x="74" width="101" height="19.5"/><use href="#e" x="76" y="4"/><use href="#c" x="100" y="1"/><text x="130" y="14" textLength="36" lengthAdjust="spacingAndGlyphs">ボディ32</text></g>
<g class="r" transform="translate(0,588.5)"><rect x="74" width="101" height="19.5"/><use href="#h" x="76" y="3"/><use href="#c" x="100" y="1"/><text x="130" y="14" textLength="36" lengthAdjust="spacingAndGlyphs">ボディ38</text></g>
<g class="r" transform="translate(0,611.9)"><rect x="74" width="101" height="19.5"/><use href="#h" x="76" y="3"/><use href="#c" x="100" y="1"/><text x="130" y="14" textLength="36" lengthAdjust="spacingAndGlyphs">ボディ39</text></g>
<g class="r" transform="translate(0,635.4)"><rect x="74" width="101" height="19.5"/><use href="#h" x="76" y="3"/><use href="#c" x="100" y="1"/><text x="130" y="14" textLength="36" lengthAdjust="spacingAndGlyphs">ボディ42</text></g>
<g class="r" transform="translate(0,658.8)"><rect x="74" width="101" height="19.5"/><use href="#h" x="76" y="3"/><use href="#c" x="100" y="1"/><text x="130" y="14" textLength="36" lengthAdjust="spacingAndGlyphs">ボディ43</text></g>
<g class="r" transform="translate(0,682.2)"><rect x="74" width="108.5" height="19.5"/><use href="#h" x="76" y="3"/><use href="#c" x="100" y="1"/><text x="130" y="14" textLength="42" lengthAdjust="spacingAndGlyphs">ボディ105</text></g>
<g class="r" transform="translate(0,705.7)"><rect x="74" width="108.5" height="19.5"/><use href="#h" x="76" y="3"/><use href="#c" x="100" y="1"/><text x="130" y="14" textLength="42" lengthAdjust="spacingAndGlyphs">ボディ106</text></g>
<g class="r" transform="translate(0,729.1)"><rect x="74" width="108.5" height="19.5"/><use href="#h" x="76" y="3"/><use href="#c" x="100" y="1"/><text x="130" y="14" textLength="42" lengthAdjust="spacingAndGlyphs">ボディ107</text></g>
<g class="r" transform="translate(0,752.6)"><rect x="74" width="108.5" height="19.5"/><use href="#h" x="76" y="3"/><use href="#c" x="100" y="1"/><text x="130" y="14" textLength="42" lengthAdjust="spacingAndGlyphs">ボディ108</text></g>
<g class="r" transform="translate(0,776)"><rect x="74" width="108.5" height="19.5"/><use href="#h" x="76" y="3"/><use href="#c" x="100" y="1"/><text x="130" y="14" textLength="42" lengthAdjust="spacingAndGlyphs">ボディ184</text></g>
<g class="r" transform="translate(0,799.4)"><rect x="74" width="108.5" height="19.5"/><use href="#h" x="76" y="3"/><use href="#c" x="100" y="1"/><text x="130" y="14" textLength="40" lengthAdjust="spacingAndGlyphs">ボディ117</text></g>
<g class="r" transform="translate(0,822.9)"><rect x="74" width="108.5" height="19.5"/><use href="#h" x="76" y="3"/><use href="#c" x="100" y="1"/><text x="130" y="14" textLength="42" lengthAdjust="spacingAndGlyphs">ボディ130</text></g>
<g class="r" transform="translate(0,846.3)"><rect x="74" width="104" height="19.5"/><use href="#h" x="76" y="3"/><use href="#c" x="100" y="1"/><text x="130" y="14" textLength="41" lengthAdjust="spacingAndGlyphs">ボディ131</text></g>
<g class="r" transform="translate(0,869.8)"><rect x="74" width="108.5" height="19.5"/><use href="#h" x="76" y="3"/><use href="#c" x="100" y="1"/><text x="130" y="14" textLength="42" lengthAdjust="spacingAndGlyphs">ボディ132</text></g>
<g class="r" transform="translate(0,893.2)"><rect x="74" width="108.5" height="19.5"/><use href="#h" x="76" y="3"/><use href="#c" x="100" y="1"/><text x="130" y="14" textLength="42" lengthAdjust="spacingAndGlyphs">ボディ134</text></g>
<g class="r" transform="translate(0,916.6)"><rect x="74" width="106" height="19.5"/><use href="#h" x="76" y="3"/><use href="#c" x="100" y="1"/><text x="130" y="14" textLength="42" lengthAdjust="spacingAndGlyphs">ボディ192</text></g>

<!-- comment -->
<rect x="4.5" y="948.5" width="292" height="23" fill="#f0f0f0" stroke="#cfcfcf"/>
<text x="27" y="964" style="font-size:10px;fill:#444" textLength="31" lengthAdjust="spacingAndGlyphs">コメント</text>
<circle cx="280.5" cy="960" r="4.5" fill="#222"/><path d="M277.5,960 H283.5 M280.5,957 V963" stroke="#f0f0f0" stroke-width="1.3"/>
<path d="M292.5,955 V966 M295,955 V966" stroke="#888" stroke-width=".8"/>

<!-- nav bar -->
<rect x="640" y="949" width="231" height="23" fill="#f0f0f0"/>
<g fill="none" stroke="#555" stroke-width="1.2">
<ellipse cx="651" cy="960" rx="8" ry="4.5"/><path d="M651,951 V969" stroke-dasharray="3 2"/><path d="M643,957 L641,960 L643,963"/>
<rect x="676" y="957" width="14" height="11"/><path d="M676,961 H690 M677,957 L679,952 H687 L689,957"/>
<path d="M703,965 L701,957 M705,958 L704,951 M708,958 V950 M711,958 L712,951 M714,959 L716,954 M702,962 Q704,970 709,970 Q715,970 716,959"/>
<circle cx="732" cy="958" r="5"/><path d="M736,962 L741,967" stroke-width="2.2"/><path d="M740,952 h4 M742,950 v4 M740,958 h4"/>
<circle cx="758" cy="958" r="6"/><path d="M762,963 L767,968" stroke-width="2.2"/><rect x="751" y="950" width="15" height="19" stroke-dasharray="1.5 2"/>
</g>
<rect x="784" y="951" width="15" height="12" fill="#8db4de" stroke="#555" stroke-width="1.5"/><path d="M788,966 H795 M791.5,963 V966" stroke="#555" stroke-width="1.5"/>
<g fill="none" stroke="#666" stroke-width="1"><rect x="814" y="953" width="15" height="15"/><path d="M814,956 H829 M814,959 H829 M814,962 H829 M814,965 H829 M817,953 V968 M820,953 V968 M823,953 V968 M826,953 V968"/></g>
<rect x="844" y="953" width="14" height="14" fill="#8db4de" stroke="#555" stroke-width="1.3"/><path d="M851,953 V967 M844,960 H858" stroke="#555" stroke-width="1.3"/>
<g fill="#333"><path d="M664,958.5 h5 l-2.5,3.5Z M772.5,958.5 h5 l-2.5,3.5Z M802,958.5 h5 l-2.5,3.5Z M832.5,958.5 h5 l-2.5,3.5Z M862.5,958.5 h5 l-2.5,3.5Z"/></g>

<!-- timeline -->
<rect y="977" width="1874" height="47" fill="#f0f0f0"/>
<rect y="977" width="1874" height="2" fill="#cbcbcb"/>
<path d="M126,979 H145 V982 Q145,985 142,985 H129 Q126,985 126,982Z" fill="#c0c0c0"/>
<rect x="141" y="985" width="1331" height="6.5" fill="#ffb0b3"/>
<rect x="135" y="1016" width="1684" height="2" fill="#c8c8c8"/>
<rect x="150" y="1011" width="1668" height="5" fill="url(#tk)"/>
<path d="M134,1017 h3 M140,1017 h3 M1822,1017 h3 M1828,1017 h3" stroke="#c8c8c8" stroke-width="2"/>
<g fill="#444">
<rect x="10" y="998" width="2.5" height="16"/><path d="M23,998 V1014 L13,1006Z"/>
<path d="M35,1006 L43,998 V1014Z"/><rect x="44" y="1001" width="2" height="10"/>
<path d="M60,997 L71,1006 L60,1015Z"/>
<rect x="83" y="1001" width="2" height="10"/><path d="M87,998 L95,1006 L87,1014Z"/>
<path d="M108,998 L118,1006 L108,1014Z"/><rect x="118.5" y="998" width="2.5" height="16"/>
</g>
<use href="#M" x="140" y="991"/><use href="#E" x="163.4" y="991"/><use href="#O" x="186.9" y="991"/><use href="#O" x="210.3" y="991"/><use href="#P" x="233.7" y="991"/><use href="#R" x="257.2" y="991"/><use href="#S" x="280.6" y="991"/><use href="#I" x="304" y="991"/><use href="#E" x="327.4" y="991"/><use href="#S" x="350.9" y="991"/>
<use href="#E" x="374.3" y="991"/><use href="#E" x="397.7" y="991"/><use href="#E" x="421.2" y="991"/><use href="#E" x="444.6" y="991"/><use href="#E" x="468" y="991"/><use href="#E" x="491.5" y="991"/><use href="#C" x="514.9" y="991"/><use href="#F" x="538.3" y="991"/><use href="#H" x="561.7" y="991"/><use href="#E" x="585.2" y="991"/>
<use href="#H" x="608.6" y="991"/><use href="#E" x="632" y="991"/><use href="#E" x="655.5" y="991"/><use href="#H" x="678.9" y="991"/><use href="#C" x="702.3" y="991"/><use href="#C" x="725.8" y="991"/><use href="#E" x="749.2" y="991"/><use href="#E" x="772.6" y="991"/><use href="#F" x="796" y="991"/><use href="#E" x="819.5" y="991"/>
<use href="#E" x="842.9" y="991"/><use href="#C" x="866.3" y="991"/><use href="#F" x="889.8" y="991"/><use href="#F" x="913.2" y="991"/><use href="#M" x="936.6" y="991"/><use href="#H" x="960.1" y="991"/><use href="#X" x="983.5" y="991"/><use href="#E" x="1006.9" y="991"/><use href="#H" x="1030.3" y="991"/><use href="#J" x="1053.8" y="991"/>
<use href="#M" x="1077.2" y="991"/><use href="#O" x="1100.6" y="991"/><use href="#O" x="1124.1" y="991"/><use href="#E" x="1147.5" y="991"/><use href="#E" x="1170.9" y="991"/><use href="#H" x="1194.4" y="991"/><use href="#S" x="1217.8" y="991"/><use href="#E" x="1241.2" y="991"/><use href="#E" x="1264.6" y="991"/><use href="#E" x="1288.1" y="991"/>
<use href="#H" x="1311.5" y="991"/><use href="#H" x="1334.9" y="991"/><use href="#E" x="1358.4" y="991"/><use href="#E" x="1381.8" y="991"/><use href="#E" x="1405.2" y="991"/><use href="#E" x="1428.7" y="991"/><use href="#F" x="1452.1" y="991"/>
<g opacity=".3">
<use href="#C" x="1475.5" y="991"/><use href="#F" x="1498.9" y="991"/><use href="#F" x="1522.4" y="991"/><use href="#P" x="1545.8" y="991"/><use href="#E" x="1569.2" y="991"/><use href="#E" x="1592.7" y="991"/><use href="#Y" x="1616.1" y="991"/><use href="#H" x="1639.5" y="991"/><use href="#B" x="1663" y="991"/><use href="#H" x="1686.4" y="991"/><use href="#E" x="1709.8" y="991"/><use href="#E" x="1733.2" y="991"/><use href="#E" x="1756.7" y="991"/><use href="#E" x="1780.1" y="991"/><use href="#F" x="1803.5" y="991"/>
</g>
<path d="M1468,987 H1480 V991 L1474,996 L1468,991Z" fill="#555"/>
<rect x="1473" y="993" width="1.5" height="25" fill="#555"/>
<circle cx="1853" cy="1006" r="5.5" fill="none" stroke="#888" stroke-width="3.5"/>
<circle cx="1853" cy="1006" r="8" fill="none" stroke="#888" stroke-width="2.5" stroke-dasharray="3 3.3"/>
</svg>
</body></html>
